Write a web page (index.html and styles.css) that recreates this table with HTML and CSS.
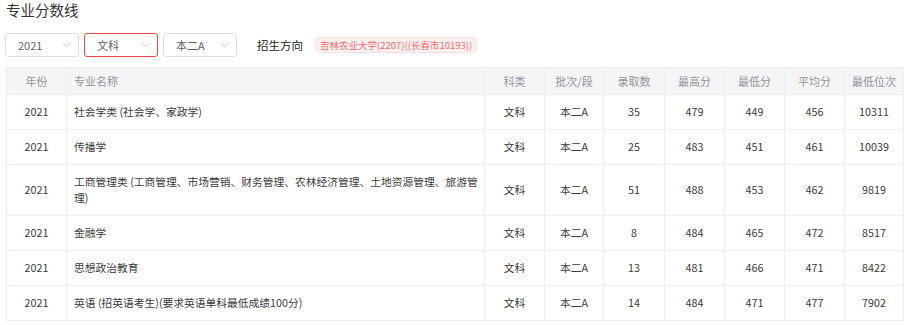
FILE: index.html
```html
<!DOCTYPE html>
<html lang="zh-CN">
<head>
<meta charset="utf-8">
<title>专业分数线</title>
<link rel="stylesheet" href="styles.css">
</head>
<body>
<div class="page">
  <h2 class="title">专业分数线</h2>
  <div class="filters">
    <div class="select"><span>2021</span><svg class="chev" viewBox="0 0 10 6"><path d="M1 1l4 4 4-4" fill="none" stroke="#c0c4cc" stroke-width="1"/></svg></div>
    <div class="select active"><span>文科</span><svg class="chev" viewBox="0 0 10 6"><path d="M1 1l4 4 4-4" fill="none" stroke="#c0c4cc" stroke-width="1"/></svg></div>
    <div class="select"><span>本二A</span><svg class="chev" viewBox="0 0 10 6"><path d="M1 1l4 4 4-4" fill="none" stroke="#c0c4cc" stroke-width="1"/></svg></div>
    <span class="label">招生方向</span>
    <span class="tag">吉林农业大学(2207)((长春市10193))</span>
  </div>
  <table class="grid">
    <colgroup>
      <col class="c-s"><col><col class="c-s"><col class="c-s2"><col class="c-s3"><col class="c-s"><col class="c-s"><col class="c-s"><col class="c-s2">
    </colgroup>
    <thead>
      <tr><th>年份</th><th class="left">专业名称</th><th>科类</th><th>批次/段</th><th>录取数</th><th>最高分</th><th>最低分</th><th>平均分</th><th>最低位次</th></tr>
    </thead>
    <tbody>
      <tr><td>2021</td><td class="left">社会学类 (社会学、家政学)</td><td>文科</td><td>本二A</td><td>35</td><td>479</td><td>449</td><td>456</td><td>10311</td></tr>
      <tr><td>2021</td><td class="left">传播学</td><td>文科</td><td>本二A</td><td>25</td><td>483</td><td>451</td><td>461</td><td>10039</td></tr>
      <tr><td>2021</td><td class="left">工商管理类 (工商管理、市场营销、财务管理、农林经济管理、土地资源管理、旅游管<span class="nw">理)</span></td><td>文科</td><td>本二A</td><td>51</td><td>488</td><td>453</td><td>462</td><td>9819</td></tr>
      <tr><td>2021</td><td class="left">金融学</td><td>文科</td><td>本二A</td><td>8</td><td>484</td><td>465</td><td>472</td><td>8517</td></tr>
      <tr><td>2021</td><td class="left">思想政治教育</td><td>文科</td><td>本二A</td><td>13</td><td>481</td><td>466</td><td>471</td><td>8422</td></tr>
      <tr><td>2021</td><td class="left">英语 (招英语考生)(要求英语单科最低成绩100分)</td><td>文科</td><td>本二A</td><td>14</td><td>484</td><td>471</td><td>477</td><td>7902</td></tr>
    </tbody>
  </table>
</div>
</body>
</html>
```
FILE: styles.css
```css
* { box-sizing: border-box; }
html, body { margin: 0; padding: 0; background: #fff; }
body {
  font-family: "Noto Sans CJK SC", "Noto Sans", sans-serif;
  color: #333;
  font-size: 11px;
}
.page { padding: 0 9px 0 5px; }
.title {
  margin: 0;
  font-size: 14.5px;
  font-weight: normal;
  line-height: 20px;
  color: #333;
  padding-left: 1px;
}
.filters {
  display: flex;
  align-items: center;
  margin-top: 13px;
  height: 24px;
}
.select {
  width: 74px;
  height: 24px;
  border: 1px solid #dcdfe6;
  border-radius: 3px;
  display: flex;
  align-items: center;
  justify-content: space-between;
  padding: 0 7px 0 12px;
  margin-right: 5px;
  color: #606266;
  font-size: 11px;
}
.select.active { border-color: #f0464a; }
.chev { width: 9px; height: 6px; }
.label {
  margin-left: 15px;
  font-size: 11.5px;
  color: #222;
}
.tag {
  margin-left: 12px;
  height: 16px;
  line-height: 14px;
  padding: 0 4px;
  font-size: 9.5px;
  color: #f56c6c;
  background: #fef0f0;
  border: 1px solid #fde2e2;
  border-radius: 3px;
}
.grid {
  margin-top: 10px;
  margin-left: 1px;
  width: 898px;
  border-collapse: collapse;
  table-layout: fixed;
  border: 1px solid #ebeef5;
}
.c-s { width: 60px; }
.c-s2 { width: 59px; }
.c-s3 { width: 61px; }
.grid th, .grid td {
  border: 1px solid #ebeef5;
  text-align: center;
  font-weight: normal;
  line-height: 16px;
  white-space: normal;
}
.grid th {
  background: #f5f5f6;
  color: #909399;
  padding: 5px 0;
}
.grid td {
  color: #3a3a3a;
  padding: 9px 0;
  font-size: 10.75px;
}
.grid .left { text-align: left; padding-left: 7px; padding-right: 6px; }
.nw { white-space: nowrap; }
```
